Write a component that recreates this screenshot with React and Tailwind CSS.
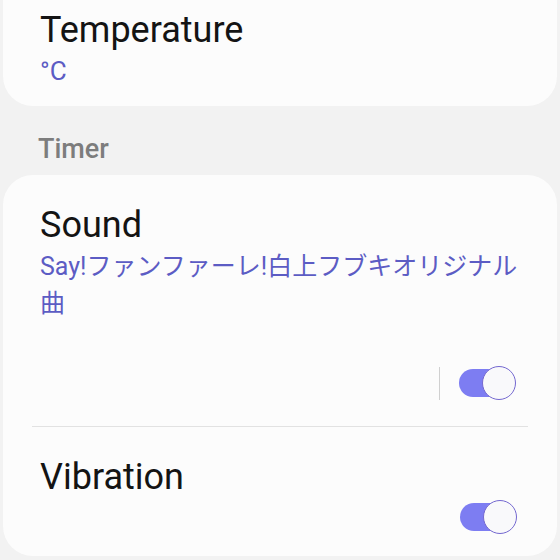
export default function App() {
  const font = { fontFamily: 'Roboto, "Noto Sans CJK JP", sans-serif' };
  const Toggle = () => (
    <div className="relative w-[57px] h-[34px]">
      <div className="absolute left-0 top-[3px] w-[54px] h-[28px] rounded-full bg-[#7d7df2]" />
      <div className="absolute right-0 top-0 w-[34px] h-[34px] rounded-full bg-[#f9f9fb] border-[1.5px] border-[#7468d0]" />
    </div>
  );
  return (
    <div className="w-[560px] h-[560px] overflow-hidden bg-[#f2f2f2]" style={font}>
      <div className="mx-[3px] bg-[#fcfcfc] rounded-b-[30px] pl-[37px] pr-[41px] pt-[8px] pb-[18px]">
        <div className="text-[36px] leading-[44px] text-[#141414]">Temperature</div>
        <div className="mt-[2px] text-[26px] leading-[34px] text-[#5c5cc4]">°C</div>
      </div>
      <div className="pl-[38px] pt-[27px] pb-[10px] text-[27px] leading-[32px] font-medium text-[#7d7d7d]">
        Timer
      </div>
      <div className="mx-[3px] h-[381px] bg-[#fcfcfc] rounded-[30px]">
        <div className="pl-[37px] pr-[41px] pt-[28px]">
          <div className="text-[36px] leading-[44px] text-[#141414]">Sound</div>
          <div className="mt-[1px] mr-[-12px] text-[25px] leading-[37px] text-[#5c5cc4]">
            Say!ファンファーレ!白上フブキオリジナル曲
          </div>
          <div className="mt-[44px] flex items-center justify-end">
            <div className="w-px h-[33px] bg-[#d0d0d0] mr-[19px]" />
            <Toggle />
          </div>
        </div>
        <div className="mx-[29px] mt-[26px] h-px bg-[#e2e2e2]" />
        <div className="pl-[37px] pr-[40px] pt-[28px]">
          <div className="text-[36px] leading-[44px] text-[#141414]">Vibration</div>
          <div className="mt-[1px] flex items-center justify-end">
            <Toggle />
          </div>
        </div>
      </div>
    </div>
  );
}
